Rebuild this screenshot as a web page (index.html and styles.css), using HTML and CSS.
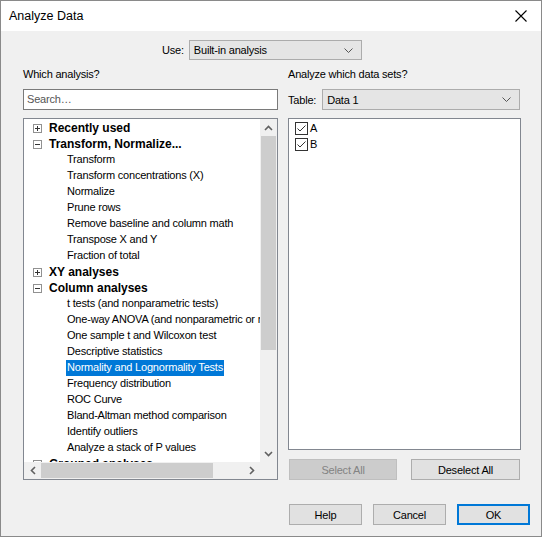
FILE: index.html
```html
<!DOCTYPE html>
<html lang="en">
<head>
    <meta charset="UTF-8" />
    <title>Analyze Data</title>
    <link rel="stylesheet" href="styles.css">
</head>
<body>

<div class="dialog">
    <div class="titlebar">
        <span class="title">Analyze Data</span>
        <svg class="close" width="12" height="12" viewBox="0 0 12 12">
            <path d="M0.5 0.5 L11.5 11.5 M11.5 0.5 L0.5 11.5" stroke="#000" stroke-width="1.1" fill="none"/>
        </svg>
    </div>

    <div class="content">
        <div class="use-row">
            <span class="label">Use:</span>
            <div class="combo combo-use">
                <span>Built-in analysis</span>
                <svg class="chev" width="9" height="5" viewBox="0 0 9 5"><path d="M0.5 0.5 L4.5 4.5 L8.5 0.5" stroke="#555" fill="none"/></svg>
            </div>
        </div>

        <div class="columns">
            <!-- left: analysis tree -->
            <div class="col col-left">
                <div class="caption">Which analysis?</div>
                <div class="search">Search…</div>
                <div class="tree">
                    <div class="viewport">
                        <div class="row group"><span class="exp plus"></span><span class="txt">Recently used</span></div>
                        <div class="row group"><span class="exp minus"></span><span class="txt">Transform, Normalize...</span></div>
                        <div class="row item"><span class="txt">Transform</span></div>
                        <div class="row item"><span class="txt">Transform concentrations (X)</span></div>
                        <div class="row item"><span class="txt">Normalize</span></div>
                        <div class="row item"><span class="txt">Prune rows</span></div>
                        <div class="row item"><span class="txt">Remove baseline and column math</span></div>
                        <div class="row item"><span class="txt">Transpose X and Y</span></div>
                        <div class="row item"><span class="txt">Fraction of total</span></div>
                        <div class="row group"><span class="exp plus"></span><span class="txt">XY analyses</span></div>
                        <div class="row group"><span class="exp minus"></span><span class="txt">Column analyses</span></div>
                        <div class="row item"><span class="txt">t tests (and nonparametric tests)</span></div>
                        <div class="row item"><span class="txt">One-way ANOVA (and nonparametric or mixed)</span></div>
                        <div class="row item"><span class="txt">One sample t and Wilcoxon test</span></div>
                        <div class="row item"><span class="txt">Descriptive statistics</span></div>
                        <div class="row item selected"><span class="txt">Normality and Lognormality Tests</span></div>
                        <div class="row item"><span class="txt">Frequency distribution</span></div>
                        <div class="row item"><span class="txt">ROC Curve</span></div>
                        <div class="row item"><span class="txt">Bland-Altman method comparison</span></div>
                        <div class="row item"><span class="txt">Identify outliers</span></div>
                        <div class="row item"><span class="txt">Analyze a stack of P values</span></div>
                        <div class="row group"><span class="exp minus"></span><span class="txt">Grouped analyses</span></div>
                        <div class="row item"><span class="txt">Two-way ANOVA</span></div>
                    </div>
                    <div class="vscroll">
                        <span class="arrow"><svg width="9" height="6" viewBox="0 0 9 6"><path d="M1 5 L4.5 1.5 L8 5" stroke="#606060" stroke-width="1.6" fill="none"/></svg></span>
                        <span class="vthumb"></span>
                        <span class="arrow end"><svg width="9" height="6" viewBox="0 0 9 6"><path d="M1 1 L4.5 4.5 L8 1" stroke="#606060" stroke-width="1.6" fill="none"/></svg></span>
                    </div>
                    <div class="hscroll">
                        <span class="arrow"><svg width="6" height="9" viewBox="0 0 6 9"><path d="M5 1 L1.5 4.5 L5 8" stroke="#606060" stroke-width="1.6" fill="none"/></svg></span>
                        <span class="hthumb"></span>
                        <span class="arrow end"><svg width="6" height="9" viewBox="0 0 6 9"><path d="M1 1 L4.5 4.5 L1 8" stroke="#606060" stroke-width="1.6" fill="none"/></svg></span>
                    </div>
                    <div class="corner"></div>
                </div>
            </div>

            <!-- right: data sets -->
            <div class="col col-right">
                <div class="caption">Analyze which data sets?</div>
                <div class="table-row">
                    <span class="label">Table:</span>
                    <div class="combo combo-table">
                        <span>Data 1</span>
                        <svg class="chev" width="9" height="5" viewBox="0 0 9 5"><path d="M0.5 0.5 L4.5 4.5 L8.5 0.5" stroke="#555" fill="none"/></svg>
                    </div>
                </div>
                <div class="datalist">
                    <div class="check-row"><span class="box"><svg width="11" height="11" viewBox="0 0 11 11"><path d="M1.5 5.5 L4 8 L9.5 2.5" stroke="#333" fill="none"/></svg></span>A</div>
                    <div class="check-row"><span class="box"><svg width="11" height="11" viewBox="0 0 11 11"><path d="M1.5 5.5 L4 8 L9.5 2.5" stroke="#333" fill="none"/></svg></span>B</div>
                </div>
                <div class="select-buttons">
                    <button class="btn disabled">Select All</button>
                    <button class="btn">Deselect All</button>
                </div>
            </div>
        </div>

        <div class="footer">
            <button class="btn">Help</button>
            <button class="btn">Cancel</button>
            <button class="btn default">OK</button>
        </div>
    </div>
</div>

</body>
</html>
```

FILE: styles.css
```css
* {
    box-sizing: border-box;
    margin: 0;
    padding: 0;
}

html, body {
    width: 542px;
    height: 537px;
    overflow: hidden;
    background: #f0f0f0;
    font-family: "Liberation Sans", Arial, sans-serif;
    font-size: 11px;
    letter-spacing: -0.2px;
    color: #000;
}

.dialog {
    width: 542px;
    height: 537px;
    border: 1px solid #8a8a8a;
    background: #f0f0f0;
    display: flex;
    flex-direction: column;
}

/* =========================
   TITLE BAR
========================= */
.titlebar {
    height: 30px;
    background: #fff;
    display: flex;
    align-items: center;
    justify-content: space-between;
    padding: 0 14px 0 8px;
}

.title {
    font-size: 12.5px;
    letter-spacing: 0;
}

/* =========================
   CONTENT
========================= */
.content {
    flex: 1;
    padding: 9px 11px 0 22px;
}

.use-row {
    display: flex;
    align-items: center;
    height: 20px;
    padding-left: 139px;
    gap: 5px;
}

.combo {
    height: 20px;
    background: #e5e5e5;
    border: 1px solid #acacac;
    display: flex;
    align-items: center;
    justify-content: space-between;
    padding: 0 8px 0 4px;
}

.combo-use { width: 173px; }
.combo-table { flex: 1; height: 21px; margin-right: 1px; }

.columns {
    display: flex;
    gap: 10px;
    margin-top: 8px;
}

.col {
    display: flex;
    flex-direction: column;
}

.col-left { width: 255px; }
.col-right { width: 233px; }

.caption {
    height: 14px;
    line-height: 13px;
    margin-bottom: 7px;
}

.search {
    height: 21px;
    background: #fff;
    border: 1px solid #7a7a7a;
    color: #555;
    padding: 0 3px;
    line-height: 18px;
    margin-bottom: 8px;
}

/* =========================
   ANALYSIS TREE
========================= */
.tree {
    height: 362px;
    border: 1px solid #828790;
    background: #fff;
    display: grid;
    grid-template-columns: 1fr 17px;
    grid-template-rows: 1fr 17px;
}

.viewport {
    overflow: hidden;
    padding-top: 1px;
}

.row {
    height: 16px;
    display: flex;
    align-items: center;
    white-space: nowrap;
}

.row.group { padding-left: 9px; }
.row.group .txt { font-weight: bold; font-size: 12px; letter-spacing: 0; margin-left: 7px; }
.row.item { padding-left: 42px; }
.row.item .txt { padding: 0 1px 2px; line-height: 14px; }
.row.selected .txt { background: #0078d7; color: #fff; }

.exp {
    width: 9px;
    height: 9px;
    border: 1px solid #919191;
    position: relative;
    flex: none;
}

.exp::before {
    content: "";
    position: absolute;
    left: 1px;
    top: 3px;
    width: 5px;
    height: 1px;
    background: #333;
}

.exp.plus::after {
    content: "";
    position: absolute;
    left: 3px;
    top: 1px;
    width: 1px;
    height: 5px;
    background: #333;
}

.vscroll, .hscroll, .corner {
    background: #f0f0f0;
}

.vscroll {
    display: flex;
    flex-direction: column;
}

.hscroll {
    display: flex;
}

.arrow {
    width: 17px;
    height: 17px;
    display: flex;
    align-items: center;
    justify-content: center;
    flex: none;
}

.vscroll .arrow.end { margin-top: auto; }
.hscroll .arrow.end { margin-left: auto; }

.vthumb {
    height: 214px;
    margin: 0 1px;
    background: #cdcdcd;
}

.hthumb {
    width: 172px;
    margin: 1px 0 0 0;
    height: 15px;
    background: #cdcdcd;
}

/* =========================
   DATA SETS
========================= */
.table-row {
    display: flex;
    align-items: center;
    gap: 6px;
    height: 21px;
    margin-bottom: 8px;
}

.datalist {
    height: 332px;
    background: #fff;
    border: 1px solid #828790;
    padding: 1px 0 0 6px;
}

.check-row {
    height: 16px;
    display: flex;
    align-items: center;
    gap: 2px;
}

.box {
    width: 13px;
    height: 13px;
    border: 1px solid #333;
    display: flex;
    align-items: center;
    justify-content: center;
}

.select-buttons {
    display: grid;
    grid-template-columns: 108px 109px;
    justify-content: space-between;
    margin-top: 9px;
    padding: 0 1px;
}

.btn {
    height: 21px;
    background: #e1e1e1;
    border: 1px solid #adadad;
    font-family: inherit;
    font-size: 11px;
    letter-spacing: -0.2px;
    color: #000;
}

.btn.disabled {
    background: #cccccc;
    border-color: #bfbfbf;
    color: #838383;
}

.btn.default {
    border: 2px solid #0078d7;
}

/* =========================
   FOOTER
========================= */
.footer {
    display: flex;
    justify-content: flex-end;
    gap: 11px;
    margin-top: 24px;
}

.footer .btn { width: 73px; }
```
